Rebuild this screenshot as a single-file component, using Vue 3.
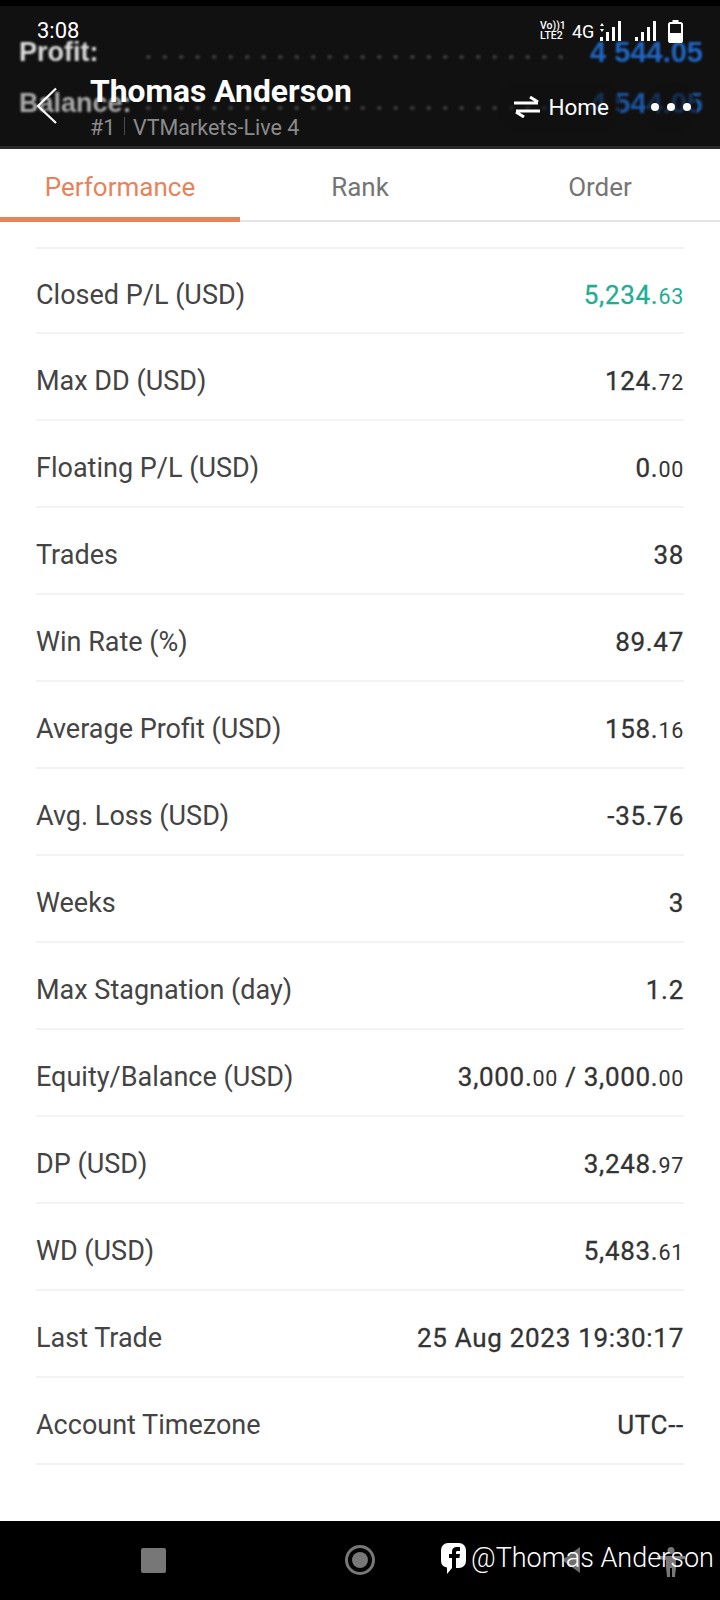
<script setup>
const rows = [
  { label: 'Closed P/L (USD)', value: '5,234.', small: '63', green: true },
  { label: 'Max DD (USD)', value: '124.', small: '72' },
  { label: 'Floating P/L (USD)', value: '0.', small: '00' },
  { label: 'Trades', value: '38' },
  { label: 'Win Rate (%)', value: '89.47' },
  { label: 'Average Profit (USD)', value: '158.', small: '16' },
  { label: 'Avg. Loss (USD)', value: '-35.76' },
  { label: 'Weeks', value: '3' },
  { label: 'Max Stagnation (day)', value: '1.2' },
  { label: 'Equity/Balance (USD)', value: '3,000.', small: '00', value2: ' / 3,000.', small2: '00' },
  { label: 'DP (USD)', value: '3,248.', small: '97' },
  { label: 'WD (USD)', value: '5,483.', small: '61' },
  { label: 'Last Trade', value: '25 Aug 2023 19:30:17' },
  { label: 'Account Timezone', value: 'UTC--' },
]
const tabs = ['Performance', 'Rank', 'Order']
</script>

<template>
  <div class="page">
    <header class="header">
      <!-- page underneath showing through the translucent bar -->
      <div class="ghost ghost_profit">
        <span class="ghost_label">Profit:</span>
        <span class="ghost_dots"></span>
        <span class="ghost_value">4 544.05</span>
      </div>
      <div class="ghost ghost_balance">
        <span class="ghost_label dim">Balance:</span>
        <span class="ghost_dots"></span>
        <span class="ghost_value dim2">4 544.05</span>
      </div>

      <div class="status_bar">
        <span class="time">3:08</span>
        <div class="status_icons">
          <div class="volte"><span>Vo))1</span><span>LTE2</span></div>
          <span class="net">4G</span>
          <svg width="21" height="20" viewBox="0 0 21 20" class="sig1">
            <path d="M0 5l2-3 2 3zM0 8l2 3 2-3z" fill="#fff"/>
            <rect x="0" y="16" width="3" height="4" fill="#fff"/>
            <rect x="6" y="11" width="3" height="9" fill="#fff"/>
            <rect x="12" y="6" width="3" height="14" fill="#fff"/>
            <rect x="18" y="0" width="3" height="20" fill="#fff"/>
          </svg>
          <svg width="21" height="20" viewBox="0 0 21 20" class="sig2">
            <rect x="0" y="16" width="3" height="4" fill="#fff"/>
            <rect x="6" y="11" width="3" height="9" fill="#fff"/>
            <rect x="12" y="6" width="3" height="14" fill="#fff"/>
            <rect x="18" y="0" width="3" height="20" fill="#fff"/>
          </svg>
          <svg width="15" height="23" viewBox="0 0 15 23" class="batt">
            <rect x="4.500" y="0" width="6" height="3" fill="#fff"/>
            <rect x="1" y="3" width="13" height="19" rx="1.500" fill="none" stroke="#fff" stroke-width="2"/>
            <rect x="1" y="13" width="13" height="10" rx="1" fill="#fff"/>
          </svg>
        </div>
      </div>

      <div class="toolbar">
        <div class="back">
          <svg width="22" height="38" viewBox="0 0 22 38">
            <path d="M20 1.500L2 19l18 17" fill="none" stroke="#fff" stroke-width="2.200"/>
          </svg>
        </div>
        <div class="title_box">
          <div class="title">Thomas Anderson</div>
          <div class="subtitle">#1 <i class="sep"></i> VTMarkets-Live 4</div>
        </div>
        <div class="home_btn">
          <svg width="26" height="22" viewBox="0 0 26 22">
            <path d="M0 7h24M16 1l8 5" fill="none" stroke="#fff" stroke-width="3"/>
            <path d="M26 15H2M10 21l-8-5" fill="none" stroke="#fff" stroke-width="3"/>
          </svg>
          <span>Home</span>
        </div>
        <div class="more_btn"><i></i><i></i><i></i></div>
      </div>
    </header>

    <nav class="tabs">
      <div v-for="(t, i) in tabs" :key="t" class="tab" :class="{ active: i === 0 }">{{ t }}</div>
    </nav>

    <main class="list">
      <div v-for="r in rows" :key="r.label" class="row">
        <span class="label">{{ r.label }}</span>
        <span class="value" :class="{ green: r.green }">
          {{ r.value }}<small v-if="r.small">{{ r.small }}</small><template v-if="r.value2">{{ r.value2 }}<small>{{ r.small2 }}</small></template>
        </span>
      </div>
    </main>

    <footer class="navbar">
      <div class="nav_square"></div>
      <div class="nav_circle"><i></i></div>
      <svg class="nav_back" width="18" height="26" viewBox="0 0 18 26"><path d="M18 0v26L0 13z" fill="#6f6f6f"/></svg>
      <svg class="nav_person" width="28" height="30" viewBox="0 0 28 30">
        <circle cx="14" cy="3.500" r="3.500" fill="#777"/>
        <path d="M0 9h28v3l-9 1v7l-1 10h-3v-9h-2v9h-3l-1-10v-7l-9-1z" fill="#777"/>
      </svg>
      <div class="fb_tag">
        <svg width="25" height="31" viewBox="0 0 25 31">
          <path d="M7 0h11a7 7 0 0 1 7 7v11a7 7 0 0 1-7 7H11l-5 6v-6.500A7 7 0 0 1 0 18V7a7 7 0 0 1 7-7z" fill="#fff"/>
          <path d="M11 26V15H8v-4h3V8.500C11 5.500 13 4 15.500 4H19v4h-2.500c-1 0-1.500.5-1.500 1.500V11h4l-.6 4H15v10z" fill="#000"/>
        </svg>
        <span>@Thomas Anderson</span>
      </div>
    </footer>
  </div>
</template>

<style scoped>
.page {
  width: 720px;
  height: 1600px;
  display: flex;
  flex-direction: column;
  background: #fff;
  font-family: Roboto, "Liberation Sans", sans-serif;
  overflow: hidden;
}
.header {
  position: relative;
  height: 149px;
  box-sizing: border-box;
  padding-top: 6px;
  background: #111;
  border-top: 6px solid #000;
  border-bottom: 3px solid #2a2a2a;
  color: #fff;
}
.ghost {
  position: absolute;
  left: 19px;
  right: 17px;
  display: flex;
  align-items: center;
  font-family: "Liberation Sans", sans-serif;
  font-weight: 700;
  font-size: 27px;
  filter: blur(1px);
}
.ghost_profit { top: 30px; }
.ghost_balance { top: 81px; }
.ghost_label { color: #ddd; width: 121px; }
.ghost_label.dim { color: #aaa; }
.ghost_dots {
  flex: 1;
  height: 4px;
  margin: 8px 24px 0 0;
  background: radial-gradient(circle, #3a3a3a 2px, transparent 2.500px) 0 0 / 16.500px 4px repeat-x;
}
.ghost_value { color: #1f66c4; font-size: 29px; }
.ghost_value.dim2 { color: #1b57a6; }

.status_bar {
  position: relative;
  display: flex;
  justify-content: space-between;
  align-items: center;
  height: 38px;
  padding: 0 37px;
}
.time { font-size: 22px; line-height: 38px; }
.status_icons {
  display: flex;
  align-items: center;
}
.volte {
  display: flex;
  flex-direction: column;
  width: 24px;
  font-size: 10.500px;
  line-height: 10px;
  font-weight: 500;
}
.net { font-size: 18px; width: 20px; margin-left: 8px; }
.sig1 { margin-left: 8px; }
.sig2 { margin-left: 14px; }
.batt { margin-left: 12px; }

.toolbar {
  position: relative;
  display: flex;
  align-items: center;
  height: 80px;
  margin-top: 17px;
  padding-left: 36px;
  padding-right: 23px;
}
.back {
  width: 55px;
  margin-top: -2px;
  display: flex;
}
.title_box { flex: 1; margin-left: -1px; }
.title {
  font-size: 31.800px;
  font-weight: 700;
  line-height: 38px;
}
.subtitle {
  font-size: 21.500px;
  line-height: 28px;
  color: #8b8b8b;
  margin-top: 4px;
}
.sep {
  display: inline-block;
  width: 1px;
  height: 18px;
  background: #4c4c4c;
  margin: 0 3px;
}
.home_btn {
  display: flex;
  align-items: center;
  gap: 8px;
  height: 52px;
  padding: 0 12px 0 16px;
  border-radius: 26px;
  background: rgba(17, 17, 17, .55);
  font-size: 22.500px;
  margin-right: 24px;
}
.more_btn {
  display: flex;
  gap: 8px;
  align-items: center;
  justify-content: center;
  width: 52px;
  height: 52px;
  border-radius: 50%;
  background: rgba(17, 17, 17, .55);
}
.more_btn i {
  width: 8px;
  height: 8px;
  border-radius: 50%;
  background: #fff;
}

.tabs {
  display: flex;
  height: 73px;
  box-sizing: border-box;
  border-bottom: 2px solid #e4e4e4;
}
.tab {
  flex: 1;
  display: flex;
  align-items: center;
  justify-content: center;
  font-size: 26px;
  color: #757575;
  padding-top: 4px;
}
.tab.active {
  color: #e8825a;
  position: relative;
}
.tab.active::after {
  content: "";
  position: absolute;
  left: 0;
  right: 0;
  bottom: -2px;
  height: 5px;
  background: #e8825a;
}

.list {
  flex: 1;
  padding: 0 36px;
  margin-top: 25px;
}
.row {
  display: flex;
  justify-content: space-between;
  align-items: center;
  height: 87px;
  box-sizing: border-box;
  padding-top: 8px;
  border-top: 2px solid #f3f3f3;
}
.row:first-child { height: 85px; }
.row:last-child { border-bottom: 2px solid #f3f3f3; height: 89px; }
.label {
  font-size: 27px;
  color: #444;
}
.value {
  font-size: 26px;
  font-weight: 400;
  color: #333;
  letter-spacing: .7px;
  white-space: pre-wrap;
  -webkit-text-stroke: .3px #333;
}
.value small {
  font-size: 21.500px;
  -webkit-text-stroke: 0;
}
.value.green { color: #1fae93; -webkit-text-stroke-color: #1fae93; }

.navbar {
  position: relative;
  height: 79px;
  background: #000;
}
.nav_square {
  position: absolute;
  left: 141px;
  top: 27px;
  width: 25px;
  height: 25px;
  border-radius: 2px;
  background: #777;
}
.nav_circle {
  position: absolute;
  left: 345px;
  top: 24px;
  width: 30px;
  height: 30px;
  box-sizing: border-box;
  border: 3px solid #777;
  border-radius: 50%;
  display: flex;
  align-items: center;
  justify-content: center;
}
.nav_circle i {
  width: 16px;
  height: 16px;
  border-radius: 50%;
  background: #777;
}
.nav_back {
  position: absolute;
  left: 562px;
  top: 26px;
}
.nav_person {
  position: absolute;
  left: 657px;
  top: 26px;
}
.fb_tag {
  position: absolute;
  left: 441px;
  top: 22px;
  display: flex;
  align-items: flex-start;
  gap: 5px;
  color: #fff;
  font-size: 27px;
  line-height: 30px;
  font-weight: 300;
  white-space: nowrap;
}
</style>
